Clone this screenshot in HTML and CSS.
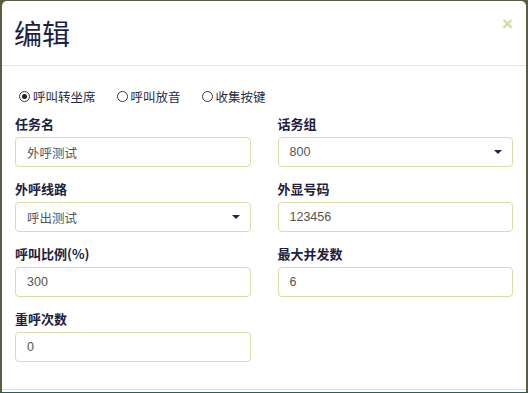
FILE: index.html
```html
<!DOCTYPE html>
<html lang="zh">
<head>
<meta charset="utf-8">
<title>编辑</title>
<link rel="stylesheet" href="styles.css">
</head>
<body>
<div class="modal">
  <div class="modal-header">
    <h4 class="modal-title">编辑</h4>
    <span class="close">×</span>
  </div>
  <div class="modal-body">
    <div class="radios">
      <label class="radio"><span class="dot checked"></span>呼叫转坐席</label>
      <label class="radio"><span class="dot"></span>呼叫放音</label>
      <label class="radio"><span class="dot"></span>收集按键</label>
    </div>
    <div class="grid">
      <div class="field">
        <div class="label">任务名</div>
        <div class="control">外呼测试</div>
      </div>
      <div class="field">
        <div class="label">话务组</div>
        <div class="control select">800<span class="caret"></span></div>
      </div>
      <div class="field">
        <div class="label">外呼线路</div>
        <div class="control select">呼出测试<span class="caret"></span></div>
      </div>
      <div class="field">
        <div class="label">外显号码</div>
        <div class="control">123456</div>
      </div>
      <div class="field">
        <div class="label">呼叫比例(%)</div>
        <div class="control">300</div>
      </div>
      <div class="field">
        <div class="label">最大并发数</div>
        <div class="control">6</div>
      </div>
      <div class="field">
        <div class="label">重呼次数</div>
        <div class="control">0</div>
      </div>
    </div>
  </div>
  <div class="modal-footer"></div>
</div>
<div class="strip"></div>
</body>
</html>
```

FILE: styles.css
```css
html, body {
  margin: 0;
  padding: 0;
  background: #5c5c3e;
  overflow: hidden;
}
body {
  font-family: "Noto Sans CJK SC", "Liberation Sans", sans-serif;
  width: 528px;
  height: 393px;
}
.modal {
  margin: 1px 2px 0 2px;
  height: 391px;
  background: #ffffff;
  border-radius: 5px 5px 0 0;
  display: flex;
  flex-direction: column;
  overflow: hidden;
}
.modal-header {
  display: flex;
  justify-content: space-between;
  align-items: flex-start;
  padding: 15px 13px 15px 12px;
  border-bottom: 1px solid #e1e1f2;
}
.modal-title {
  margin: 0;
  font-size: 28px;
  line-height: 34px;
  font-weight: 400;
  color: #1e1e3e;
}
.close {
  font-family: "Liberation Sans", sans-serif;
  font-size: 19px;
  font-weight: 700;
  line-height: 20px;
  color: #d6d6a2;
  margin-top: -2px;
}
.modal-body {
  flex: 1;
  padding: 20px 13px 0 13px;
}
.radios {
  display: flex;
  align-items: center;
  height: 20px;
  padding-left: 4px;
  gap: 21px;
}
.radio {
  display: flex;
  align-items: center;
  gap: 3px;
  font-size: 12.5px;
  color: #2a2a3e;
}
.dot {
  width: 9px;
  height: 9px;
  border: 1px solid #3a3a3a;
  border-radius: 50%;
  display: flex;
  align-items: center;
  justify-content: center;
}
.dot.checked::after {
  content: "";
  width: 5px;
  height: 5px;
  border-radius: 50%;
  background: #222;
}
.grid {
  margin-top: 9px;
  display: grid;
  grid-template-columns: 1fr 1fr;
  column-gap: 27px;
  row-gap: 13px;
}
.label {
  font-size: 13px;
  font-weight: 700;
  line-height: 18px;
  color: #20203c;
  margin-bottom: 4px;
}
.control {
  height: 30px;
  box-sizing: border-box;
  border: 1px solid #dcdcaa;
  border-radius: 4px;
  padding: 0 11px;
  display: flex;
  align-items: center;
  justify-content: space-between;
  font-size: 12.5px;
  color: #555555;
  font-family: "Liberation Sans", "Noto Sans CJK SC", sans-serif;
}
.caret {
  width: 0;
  height: 0;
  border-left: 4px solid transparent;
  border-right: 4px solid transparent;
  border-top: 4px solid #22224a;
  margin-right: -1px;
}
.modal-footer {
  height: 2px;
  border-top: 1px solid #dcdcf0;
}
.strip {
  height: 1px;
  background: #2f5a5a;
}
```
